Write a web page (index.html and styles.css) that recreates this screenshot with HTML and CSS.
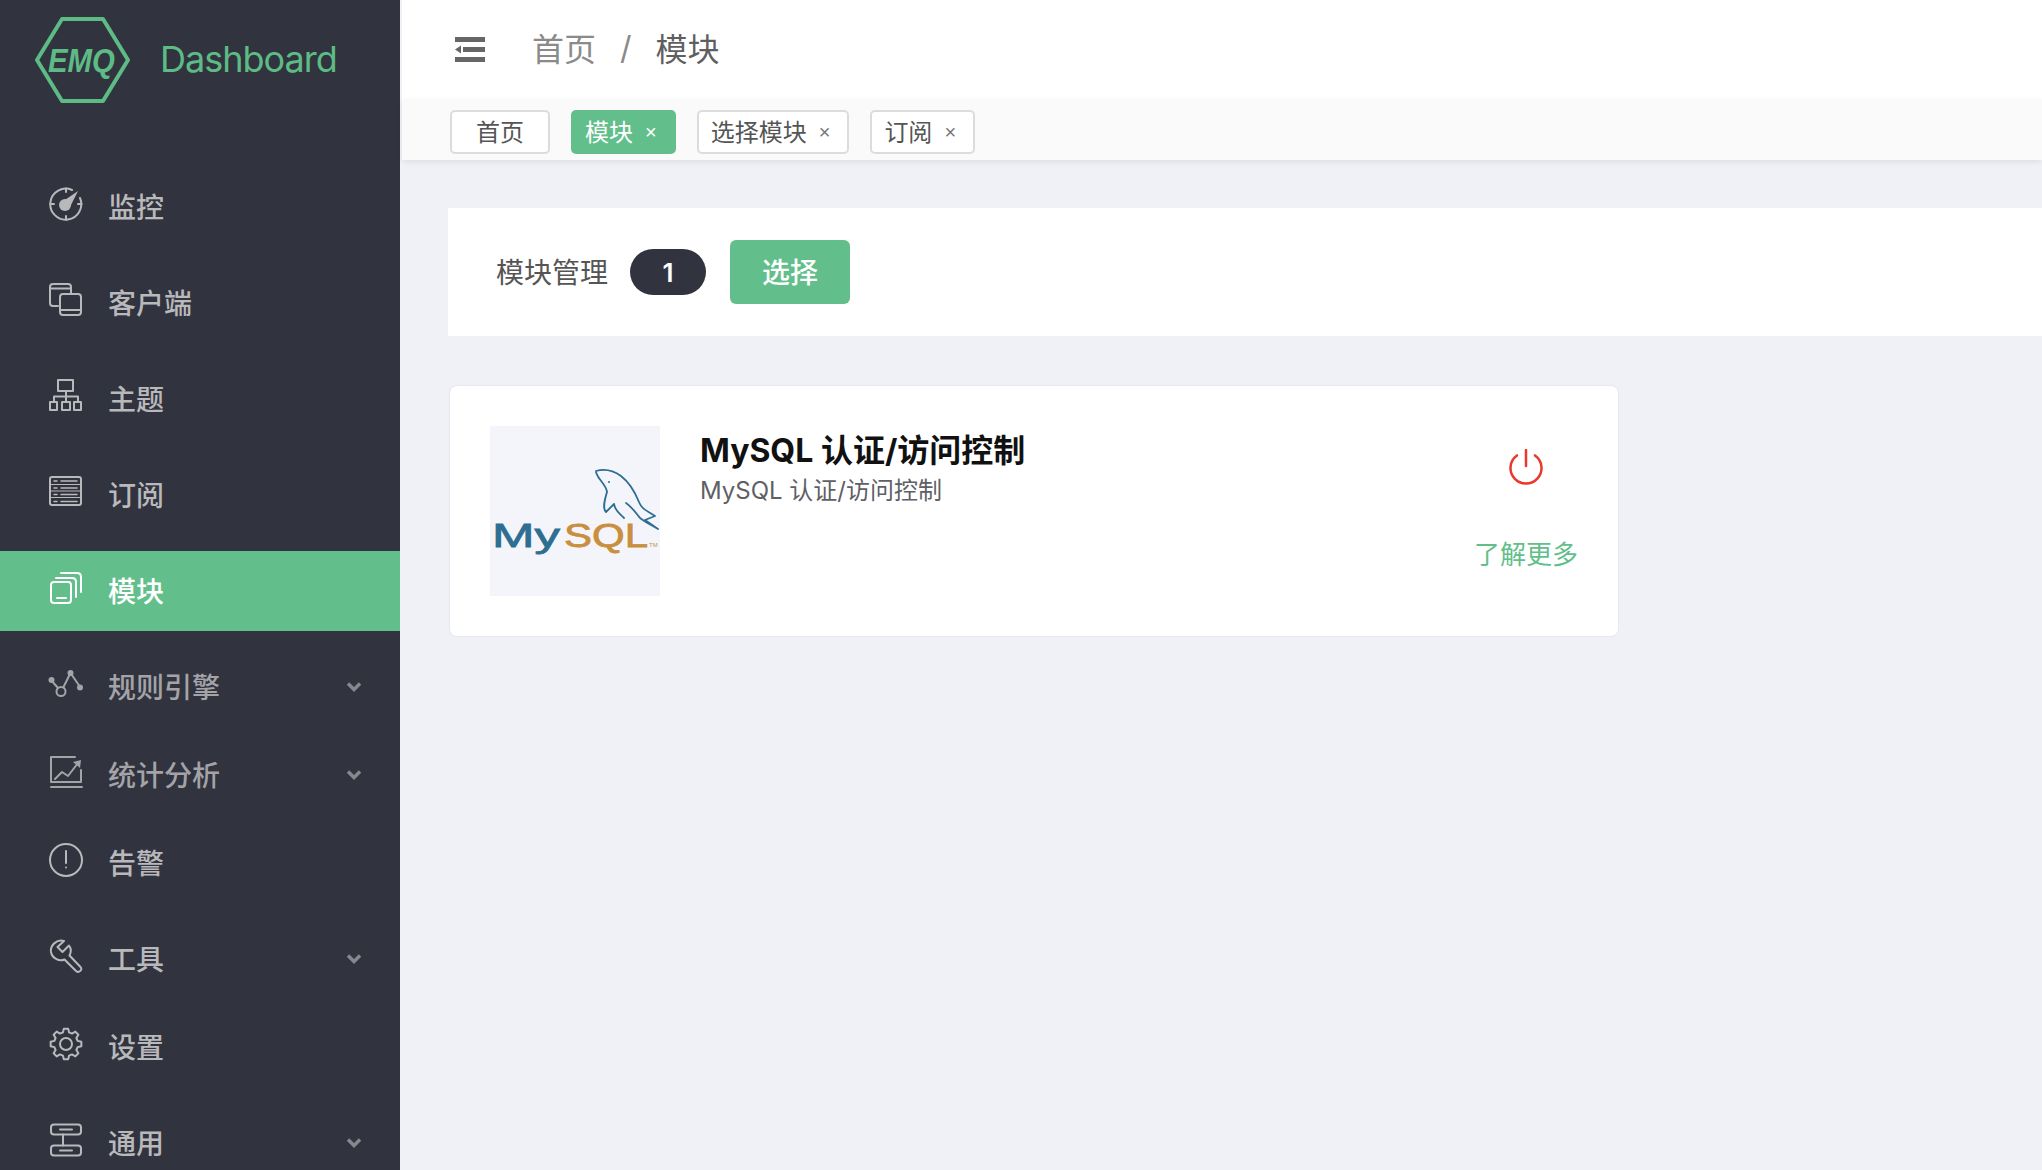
FILE: index.html
```html
<!DOCTYPE html>
<html lang="zh-CN">
<head>
  <meta charset="UTF-8" />
  <title>EMQ Dashboard</title>
  <link rel="stylesheet" href="styles.css">
</head>
<body>
  <aside class="sidebar">
    <div class="logo">
      <svg class="logo-mark" width="96" height="88" viewBox="0 0 96 88">
        <polygon points="3,44 28,3 69,3 94,44 69,85 28,85" fill="none" stroke="#5dbb85" stroke-width="4" stroke-linejoin="round"/>
        <text x="14" y="56" class="logo-emq" textLength="67" lengthAdjust="spacingAndGlyphs">EMQ</text>
      </svg>
      <span class="logo-text">Dashboard</span>
    </div>
    <nav class="menu">
      <a class="menu-item">
        <svg class="menu-icon" viewBox="0 0 36 36"><path d="M24 4A15.5 15.5 0 1 0 32 12"/><path d="M18 2.5V6M2.500 18H6M33.500 18H30M18 33.500V30"/><circle class="solid" cx="17" cy="19" r="6"/><path class="solid" d="M14 16L30 5L21 23Z"/></svg>
        <span class="menu-label">监控</span>
      </a>
      <a class="menu-item">
        <svg class="menu-icon" viewBox="0 0 36 36"><path d="M10 24H5Q2 24 2 21V5Q2 2 5 2H20Q23 2 23 5V11"/><path d="M2 6.500H23"/><rect x="12" y="12" width="21" height="21" rx="3"/><path d="M12 28H33"/></svg>
        <span class="menu-label">客户端</span>
      </a>
      <a class="menu-item">
        <svg class="menu-icon" viewBox="0 0 36 36"><rect x="10" y="2" width="15" height="11"/><path d="M18 13V24M6 24V18.500H30V24"/><rect x="2" y="24" width="7" height="8"/><rect x="14" y="24" width="8" height="8"/><rect x="26" y="24" width="7" height="8"/></svg>
        <span class="menu-label">主题</span>
      </a>
      <a class="menu-item">
        <svg class="menu-icon" viewBox="0 0 36 36"><rect x="2" y="3" width="31" height="28" rx="2"/><path d="M2 10.500H33M2 17H33M2 23.500H33" stroke-width="1.200"/><path d="M6 7H9M13 7H29M6 14H9M13 14H29M6 20.500H9M13 20.500H29M6 27.500H9M13 27.500H29" stroke-width="1.500"/></svg>
        <span class="menu-label">订阅</span>
      </a>
      <a class="menu-item active">
        <svg class="menu-icon" viewBox="0 0 36 36"><rect x="3" y="12" width="20" height="21" rx="3"/><path d="M9 28H18"/><path d="M8 8H24Q28 8 28 12V27"/><path d="M13 3H29Q33 3 33 7V22"/></svg>
        <span class="menu-label">模块</span>
      </a>
      <a class="menu-item has-sub dim">
        <svg class="menu-icon" viewBox="0 0 36 36"><path d="M3 14L10 22M15.500 21L22.500 7L32.500 21.500"/><circle class="solid" cx="3.500" cy="14" r="3"/><circle class="solid" cx="22.500" cy="7" r="3"/><circle class="solid" cx="32" cy="21.500" r="3"/><circle cx="13" cy="25.500" r="4.500"/></svg>
        <span class="menu-label">规则引擎</span>
        <svg class="chevron" viewBox="0 0 16 12"><path d="M2 2.500L8 8.500L14 2.500"/></svg>
      </a>
      <a class="menu-item has-sub dim">
        <svg class="menu-icon" viewBox="0 0 36 36"><path d="M27 3H3V28H33V16"/><path d="M3 33H34"/><path d="M7 25L14 18L20 22L30 9"/><path class="solid" d="M25 8L33 6L32 14Z"/></svg>
        <span class="menu-label">统计分析</span>
        <svg class="chevron" viewBox="0 0 16 12"><path d="M2 2.500L8 8.500L14 2.500"/></svg>
      </a>
      <a class="menu-item">
        <svg class="menu-icon" viewBox="0 0 36 36"><circle cx="18" cy="18" r="16"/><path d="M18 9V21"/><circle class="solid" cx="18" cy="25.500" r="1"/></svg>
        <span class="menu-label">告警</span>
      </a>
      <a class="menu-item has-sub">
        <svg class="menu-icon" viewBox="0 0 36 36"><path d="M16 3C9 1 2 7 3 14C4 20 11 24 16.500 21.500L28 33C31 35.500 35 31.500 32.500 29L21.500 17.500C23.500 13.500 23 10 21 7.500L14.500 14L9.500 9Z"/></svg>
        <span class="menu-label">工具</span>
        <svg class="chevron" viewBox="0 0 16 12"><path d="M2 2.500L8 8.500L14 2.500"/></svg>
      </a>
      <a class="menu-item">
        <svg class="menu-icon" viewBox="0 0 36 36"><path d="M15.840 2.650L20.160 2.650L21.100 6.400L24 7.610L27.330 5.620L30.380 8.670L28.390 12L29.600 14.900L33.350 15.840L33.350 20.160L29.600 21.100L28.390 24L30.380 27.330L27.330 30.380L24 28.390L21.100 29.600L20.160 33.350L15.840 33.350L14.900 29.600L12 28.390L8.670 30.380L5.620 27.330L7.610 24L6.400 21.100L2.650 20.160L2.650 15.840L6.400 14.900L7.610 12L5.620 8.670L8.670 5.620L12 7.610L14.900 6.400Z"/><circle cx="18" cy="18" r="6"/></svg>
        <span class="menu-label">设置</span>
      </a>
      <a class="menu-item has-sub">
        <svg class="menu-icon" viewBox="0 0 36 36"><rect x="3" y="2.500" width="30" height="10" rx="3"/><rect x="3" y="23.500" width="30" height="10" rx="3"/><path d="M12 7.500H24M12 28.500H24M15 12.500V23.500"/></svg>
        <span class="menu-label">通用</span>
        <svg class="chevron" viewBox="0 0 16 12"><path d="M2 2.500L8 8.500L14 2.500"/></svg>
      </a>
    </nav>
  </aside>

  <main class="main">
    <header class="topbar">
      <svg class="hamburger" width="30" height="25" viewBox="0 0 30 25">
        <rect width="30" height="5"/><rect x="8" y="10" width="22" height="5"/><rect y="20" width="30" height="5"/><path d="M6 8.500V16.500L0 12.500Z"/>
      </svg>
      <div class="breadcrumb">
        <span class="crumb-link">首页</span>
        <span class="crumb-sep">/</span>
        <span class="crumb-current">模块</span>
      </div>
    </header>

    <div class="tabs">
      <span class="tab home">首页</span>
      <span class="tab active">模块<i class="tab-close">×</i></span>
      <span class="tab">选择模块<i class="tab-close">×</i></span>
      <span class="tab">订阅<i class="tab-close">×</i></span>
    </div>

    <section class="content">
      <div class="manage-bar">
        <span class="manage-title">模块管理</span>
        <span class="count">1</span>
        <button class="btn-select">选择</button>
      </div>

      <div class="module-card">
        <div class="module-img">
          <svg width="170" height="170" viewBox="0 0 170 170">
            <g fill="none" stroke="#2e6e91" stroke-width="1.800" stroke-linecap="round" stroke-linejoin="round">
              <path d="M106 45C116 42 124 45 131 50C140 57 145 66 149 76C152 84 158 85 165 90L155 94L168 103C160 98 155 96 150 92C146 87 142 81 136 77"/>
              <path d="M106 46C108 54 116 58 117 66C115 73 112 82 116 86L124 78C125 85 130 88 134 92"/>
            </g>
            <circle cx="119" cy="56" r="1" fill="#2e6e91"/>
            <text class="logo-my" x="2" y="121" textLength="68" lengthAdjust="spacingAndGlyphs">My</text>
            <text class="logo-sql" x="74" y="121" textLength="84" lengthAdjust="spacingAndGlyphs">SQL</text>
            <text class="logo-tm" x="159" y="121">TM</text>
          </svg>
        </div>
        <div class="module-info">
          <div class="module-name">MySQL 认证/访问控制</div>
          <div class="module-desc">MySQL 认证/访问控制</div>
        </div>
        <div class="module-actions">
          <svg class="power" width="34" height="36" viewBox="0 0 34 36">
            <path d="M8 6.400A15.500 15.500 0 1 0 26 6.400"/><path d="M17 1V17"/>
          </svg>
          <a class="more">了解更多</a>
        </div>
      </div>
    </section>
  </main>
</body>
</html>
```

FILE: styles.css
```css
* {
  box-sizing: border-box;
}
html, body {
  height: 100%;
}
body {
  margin: 0;
  display: flex;
  overflow: hidden;
  font-family: Inter, "Noto Sans CJK SC", sans-serif;
  background-color: #f0f1f6;
  color: #606266;
}

/* sidebar */
.sidebar {
  width: 400px;
  flex-shrink: 0;
  height: 100%;
  overflow: hidden;
  background-color: #31333f;
}
.logo {
  height: 159px;
  padding: 16px 0 0 34px;
  display: flex;
  align-items: flex-start;
}
.logo-mark {
  flex-shrink: 0;
}
.logo-emq {
  font-family: "Liberation Sans", sans-serif;
  font-size: 33px;
  font-weight: bold;
  font-style: italic;
  fill: #5dbb85;
}
.logo-text {
  margin: 19px 0 0 30px;
  font-size: 36px;
  line-height: 48px;
  letter-spacing: -1px;
  color: #5dbb85;
}
.menu {
  display: flex;
  flex-direction: column;
}
.menu-item {
  height: 80px;
  margin: 8px 0;
  padding-left: 48px;
  display: flex;
  flex-shrink: 0;
  align-items: center;
  font-size: 28px;
  font-weight: 500;
  color: #b9b9bc;
}
.menu-item.has-sub {
  margin-bottom: 0;
}
.menu-item.dim {
  color: #a3a3a8;
}
.menu-item.active {
  background-color: #62bf8b;
  color: #fff;
}
.menu-label {
  margin-bottom: 2px;
}
.menu-icon {
  width: 36px;
  height: 36px;
  margin: 0 24px 6px 0;
  flex-shrink: 0;
  fill: none;
  stroke: currentColor;
  stroke-width: 2;
  stroke-linejoin: round;
  stroke-linecap: round;
}
.menu-icon .solid {
  fill: currentColor;
  stroke: none;
}
.chevron {
  width: 16px;
  height: 12px;
  margin: 0 38px 0 auto;
  fill: none;
  stroke: #87878c;
  stroke-width: 3.500;
}

/* main */
.main {
  flex: 1;
  min-width: 0;
  height: 100%;
  display: flex;
  flex-direction: column;
}
.topbar {
  height: 99px;
  margin-left: 2px;
  padding-left: 53px;
  display: flex;
  align-items: center;
  background-color: #fff;
}
.hamburger {
  fill: #666;
  flex-shrink: 0;
}
.breadcrumb {
  margin: 0 0 5px 47px;
  display: flex;
  align-items: center;
  font-size: 32px;
}
.crumb-link {
  color: #8a8a8a;
}
.crumb-sep {
  margin: 0 24px;
  color: #8a8a8a;
}
.crumb-current {
  color: #5f5f5f;
}
.tabs {
  height: 61px;
  margin-left: 2px;
  padding: 11px 0 0 48px;
  display: flex;
  gap: 21px;
  background-color: #fafafa;
  box-shadow: 0 2px 6px rgba(0, 0, 0, 0.08);
}
.tab {
  height: 44px;
  padding: 0 17px 3px 12px;
  display: flex;
  align-items: center;
  background-color: #fff;
  border: 2px solid #dcdcdc;
  border-radius: 5px;
  font-size: 24px;
  color: #555;
}
.tab.home {
  padding: 0 24px 3px;
}
.tab.active {
  background-color: #62bf8b;
  border-color: #62bf8b;
  color: #fff;
}
.tab-close {
  margin: 3px 0 0 12px;
  font-size: 20px;
  font-style: normal;
  line-height: 1;
  font-family: "Liberation Sans", sans-serif;
  color: #777;
}
.tab.active .tab-close {
  color: #fff;
}

/* content */
.content {
  flex: 1;
  padding: 48px 0 0 48px;
}
.manage-bar {
  height: 128px;
  padding-left: 48px;
  display: flex;
  align-items: center;
  background-color: #fff;
}
.manage-title {
  padding-bottom: 3px;
  font-size: 28px;
  color: #555;
}
.count {
  width: 76px;
  height: 46px;
  margin-left: 22px;
  display: flex;
  align-items: center;
  justify-content: center;
  background-color: #31333f;
  border-radius: 23px;
  font-size: 26px;
  font-weight: 600;
  color: #fff;
}
.btn-select {
  width: 120px;
  height: 64px;
  margin-left: 24px;
  padding-bottom: 3px;
  border: none;
  border-radius: 6px;
  background-color: #62bf8b;
  font-family: inherit;
  font-size: 28px;
  font-weight: 500;
  color: #fff;
}
.module-card {
  width: 1170px;
  height: 252px;
  margin: 49px 0 0 1px;
  padding: 40px;
  display: flex;
  background-color: #fff;
  border: 1px solid #e6e8ef;
  border-radius: 8px;
}
.module-img {
  width: 170px;
  height: 170px;
  flex-shrink: 0;
  background-color: #f4f5fb;
}
.logo-my, .logo-sql {
  font-family: "Liberation Sans", sans-serif;
  font-size: 34px;
  stroke-width: 0.800;
}
.logo-my {
  fill: #2e6e91;
  stroke: #2e6e91;
}
.logo-sql {
  fill: #c98f3e;
  stroke: #c98f3e;
}
.logo-tm {
  font-family: "Liberation Sans", sans-serif;
  font-size: 6px;
  fill: #c98f3e;
}
.module-info {
  flex: 1;
  margin-left: 40px;
}
.module-name {
  margin-top: 4px;
  font-size: 32px;
  line-height: 42px;
  font-weight: 700;
  color: #111;
}
.module-desc {
  margin-top: 2px;
  font-size: 24px;
  line-height: 34px;
  color: #5f5f66;
}
.module-actions {
  width: 104px;
  display: flex;
  flex-direction: column;
  align-items: center;
}
.power {
  margin-top: 23px;
  fill: none;
  stroke: #e8392a;
  stroke-width: 2.500;
  stroke-linecap: round;
}
.more {
  margin-top: 52px;
  font-size: 26px;
  line-height: 36px;
  white-space: nowrap;
  color: #62bf8b;
}
```
